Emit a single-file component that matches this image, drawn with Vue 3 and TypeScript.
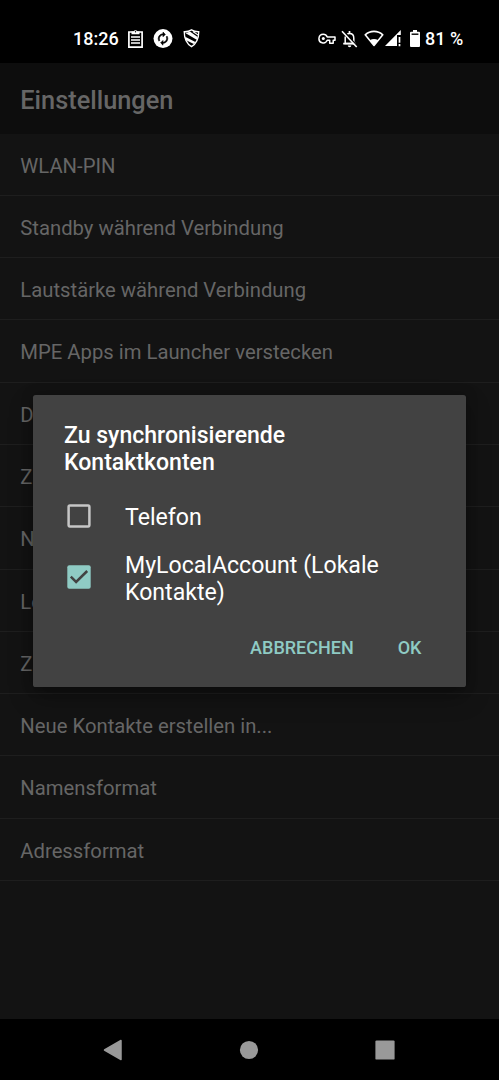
<script setup lang="ts">
import { ref } from 'vue'

interface Account {
  label: string
  checked: boolean
}

const settings: string[] = [
  'WLAN-PIN',
  'Standby während Verbindung',
  'Lautstärke während Verbindung',
  'MPE Apps im Launcher verstecken',
  'D',
  'Z',
  'N',
  'Lo',
  'Z',
  'Neue Kontakte erstellen in...',
  'Namensformat',
  'Adressformat',
]

const accounts = ref<Account[]>([
  { label: 'Telefon', checked: false },
  { label: 'MyLocalAccount (Lokale Kontakte)', checked: true },
])

function toggle(account: Account): void {
  account.checked = !account.checked
}
</script>

<template>
  <div class="screen">
    <header class="status">
      <div class="status-left">
        <span class="clock">18:26</span>
        <svg class="clipboard" width="15" height="20" viewBox="0 0 15 20">
          <path d="M.9 3h13.2v15.200H.9z" fill="none" stroke="#fff" stroke-width="1.700" />
          <path d="M3.500 5.300V2.600h2.200a1.900 1.900 0 0 1 3.600 0h2.200v2.700z" fill="#fff" />
          <path d="M3 8h9M3 11h9M3 14h9" stroke="#fff" stroke-width="1.700" />
          <circle cx="7.500" cy="2.700" r=".7" fill="#000" />
        </svg>
        <svg class="sync" width="20" height="20" viewBox="0 0 20 20">
          <circle cx="10" cy="9.600" r="9.500" fill="#fff" />
          <g transform="translate(2.800 2.400) scale(.6)">
            <path d="M12 6v3l4-4-4-4v3c-4.420 0-8 3.580-8 8 0 1.570.46 3.030 1.240 4.260L6.700 14.800c-.45-.83-.7-1.790-.7-2.800 0-3.310 2.690-6 6-6zm6.760 1.740L17.300 9.200c.44.84.7 1.790.7 2.800 0 3.310-2.690 6-6 6v-3l-4 4 4 4v-3c4.420 0 8-3.580 8-8 0-1.570-.46-3.030-1.240-4.260z" fill="#000" stroke="#000" stroke-width=".9" />
          </g>
        </svg>
        <svg class="shield" width="17" height="19" viewBox="0 0 18 19" preserveAspectRatio="none">
          <path d="M1.300 2.700Q5.500 2.900 9 .9q3.500 2 7.700 1.800Q16.700 13 9 17.700 1.300 13 1.300 2.700z" fill="#000" stroke="#fff" stroke-width="1.400" />
          <path d="M2 3.700q3.500 0 5.300-1.200l8.200 5.500-1 2.700zM2.300 7.800l10.800 5.300-1.600 2L3.400 11.300z" fill="#fff" />
          <path d="M10.500 2.600l5.400 3.300" stroke="#fff" stroke-width="1.200" />
        </svg>
      </div>
      <div class="status-right">
        <svg class="key" width="18" height="12" viewBox="0 0 18 12">
          <path d="M5.200 1.300a4.300 4.300 0 1 0 4 6h2.500v2.900h3.500V7.300h1.800V3.900H9.200a4.300 4.300 0 0 0-4-2.600z" fill="none" stroke="#fff" stroke-width="1.500" stroke-linejoin="round" />
          <circle cx="5.300" cy="5.600" r="1.500" fill="#fff" />
        </svg>
        <svg class="bell" width="17" height="18" viewBox="0 0 17 18">
          <path d="M4.200 6.500v6.900h8.600V8.200c0-2.800-1.700-4.700-4.300-4.700-.9 0-1.700.2-2.400.7" fill="none" stroke="#fff" stroke-width="1.500" />
          <path d="M2.200 13.700h12.500M8.500 1v2.500" stroke="#fff" stroke-width="1.700" />
          <path d="M6.800 15.400h3.500a1.700 1.700 0 0 1-3.500 0z" fill="#fff" />
          <path d="M2.500.8l14 15.400" stroke="#000" stroke-width="1.300" />
          <path d="M1 1.300l14.700 15.700" stroke="#fff" stroke-width="1.600" />
        </svg>
        <svg class="wifi" width="20" height="17" viewBox="0 0 20 17">
          <path d="M1.200 4.800C6.300.2 13.700.2 18.800 4.800L10 15.400z" fill="none" stroke="#fff" stroke-width="1.600" stroke-linejoin="round" />
          <path d="M5.800 10.200q4.200-2.600 8.400 0L10 15.600z" fill="#fff" />
        </svg>
        <svg class="signal" width="17" height="17" viewBox="0 0 17 17">
          <path d="M0 16L15.800 0v5H12v11z" fill="#fff" />
          <path d="M14.500 7v5.700M14.500 14v2.200" stroke="#fff" stroke-width="1.700" />
        </svg>
        <svg class="battery" width="10" height="17" viewBox="0 0 10 17">
          <path d="M3 0h4v1.800h2a1 1 0 0 1 1 1V16a1 1 0 0 1-1 1H1a1 1 0 0 1-1-1V2.800a1 1 0 0 1 1-1h2z" fill="#fff" />
          <path d="M1.600 4.200h6.800" stroke="#000" stroke-width="1.400" />
        </svg>
        <span class="percent">81 %</span>
      </div>
    </header>

    <main class="page">
      <h1 class="page-title">Einstellungen</h1>
      <ul class="settings">
        <li v-for="(item, i) in settings" :key="i" class="setting"><span>{{ item }}</span></li>
      </ul>
    </main>

    <section class="dialog" role="dialog">
      <h2 class="dialog-title">Zu synchronisierende Kontaktkonten</h2>
      <div class="accounts">
        <div v-for="account in accounts" :key="account.label" class="account" @click="toggle(account)">
          <svg class="box" width="24" height="24" viewBox="0 0 24 24">
            <template v-if="account.checked">
              <rect x=".3" y=".3" width="23.400" height="23.400" rx="2" fill="#8fcbc4" />
              <path d="M3.800 11.700l5.300 5.200L20.200 6" fill="none" stroke="#424242" stroke-width="2.500" />
            </template>
            <rect v-else x="1.600" y="1.600" width="20.800" height="20.800" rx="1.300" fill="none" stroke="#c6c6c6" stroke-width="2.500" />
          </svg>
          <span class="account-label">{{ account.label }}</span>
        </div>
      </div>
      <div class="actions">
        <button type="button" class="action cancel">ABBRECHEN</button>
        <button type="button" class="action">OK</button>
      </div>
    </section>

    <nav class="navbar">
      <svg width="20" height="22" viewBox="0 0 20 22"><path d="M1.500 11L18 1.500v19z" fill="#999" stroke="#999" stroke-width="1.500" stroke-linejoin="round" /></svg>
      <svg width="20" height="20" viewBox="0 0 20 20"><circle cx="10" cy="10" r="9.100" fill="#999" /></svg>
      <svg width="20" height="20" viewBox="0 0 20 20"><rect x=".4" y=".4" width="19.200" height="19.200" rx="1.200" fill="#999" /></svg>
    </nav>
  </div>
</template>

<style>
body {
  background: #000;
}
</style>

<style scoped>
.screen {
  position: relative;
  display: flex;
  flex-direction: column;
  width: 499px;
  height: 1080px;
  overflow: hidden;
  background: #000;
  font-family: Roboto, "Liberation Sans", sans-serif;
}

.status {
  box-sizing: border-box;
  display: flex;
  flex: none;
  justify-content: space-between;
  height: 63px;
  padding: 14px 36px 0 73px;
  color: #fff;
  font-size: 18px;
  font-weight: 500;
  line-height: 50px;
}

.status-left,
.status-right {
  display: flex;
  align-items: center;
  height: 50px;
}

.status-right {
  height: 49px;
}

.clock {
  width: 55px;
  white-space: nowrap;
}

.sync {
  margin-left: 10.300px;
}

.shield {
  margin-left: 9.500px;
  margin-bottom: 1px;
}

.bell {
  margin-left: 5px;
}

.wifi {
  margin-left: 6px;
}

.signal {
  margin-left: 1px;
}

.battery {
  margin-left: 8px;
}

.percent {
  width: 38px;
  margin-left: 5px;
  line-height: 51px;
  white-space: nowrap;
}

.page {
  flex: none;
  height: 956px;
  background: #131313;
}

.page-title {
  height: 70.500px;
  margin: 0;
  padding-left: 20.300px;
  background: #0d0d0d;
  color: #666;
  font-size: 25.350px;
  font-weight: 500;
  line-height: 74px;
}

.settings {
  margin: 0;
  padding: 0;
  list-style: none;
}

.setting {
  box-sizing: border-box;
  height: 62.300px;
  padding-left: 20.300px;
  border-bottom: 1px solid #1e1e1e;
  color: #666;
  font-size: 20.270px;
  line-height: 64.400px;
}

.dialog {
  position: absolute;
  top: 395px;
  left: 33px;
  box-sizing: border-box;
  width: 433px;
  height: 291.500px;
  padding: 26.500px 31px 0;
  border-radius: 2.600px;
  background: #424242;
  box-shadow: 0 10px 24px rgba(0, 0, 0, 0.3), 0 0 12px rgba(0, 0, 0, 0.25);
  color: #fff;
}

.dialog-title {
  width: 300px;
  margin: 0;
  font-size: 23.050px;
  font-weight: 500;
  line-height: 27px;
}

.accounts {
  display: flex;
  flex-direction: column;
  padding-top: 19.700px;
}

.account {
  display: flex;
  align-items: center;
  min-height: 42px;
}

.account + .account {
  min-height: 79px;
}

.box {
  flex: none;
  margin-left: 3px;
}

.account-label {
  width: 280px;
  margin-left: 34px;
  padding-top: 3.200px;
  font-size: 23.100px;
  line-height: 27px;
}

.account + .account .account-label {
  padding-top: 4.600px;
}

.actions {
  display: flex;
  justify-content: flex-end;
  margin-top: 14px;
  padding-right: 13.500px;
}

.action {
  margin: 0;
  padding: 0;
  border: 0;
  background: none;
  color: #8fcbc4;
  font: 500 18px/36px Roboto, "Liberation Sans", sans-serif;
}

.cancel {
  margin-right: 44px;
}

.navbar {
  box-sizing: border-box;
  display: flex;
  flex: 1;
  align-items: center;
  justify-content: space-between;
  padding: 0 104px 0 103px;
}
</style>
